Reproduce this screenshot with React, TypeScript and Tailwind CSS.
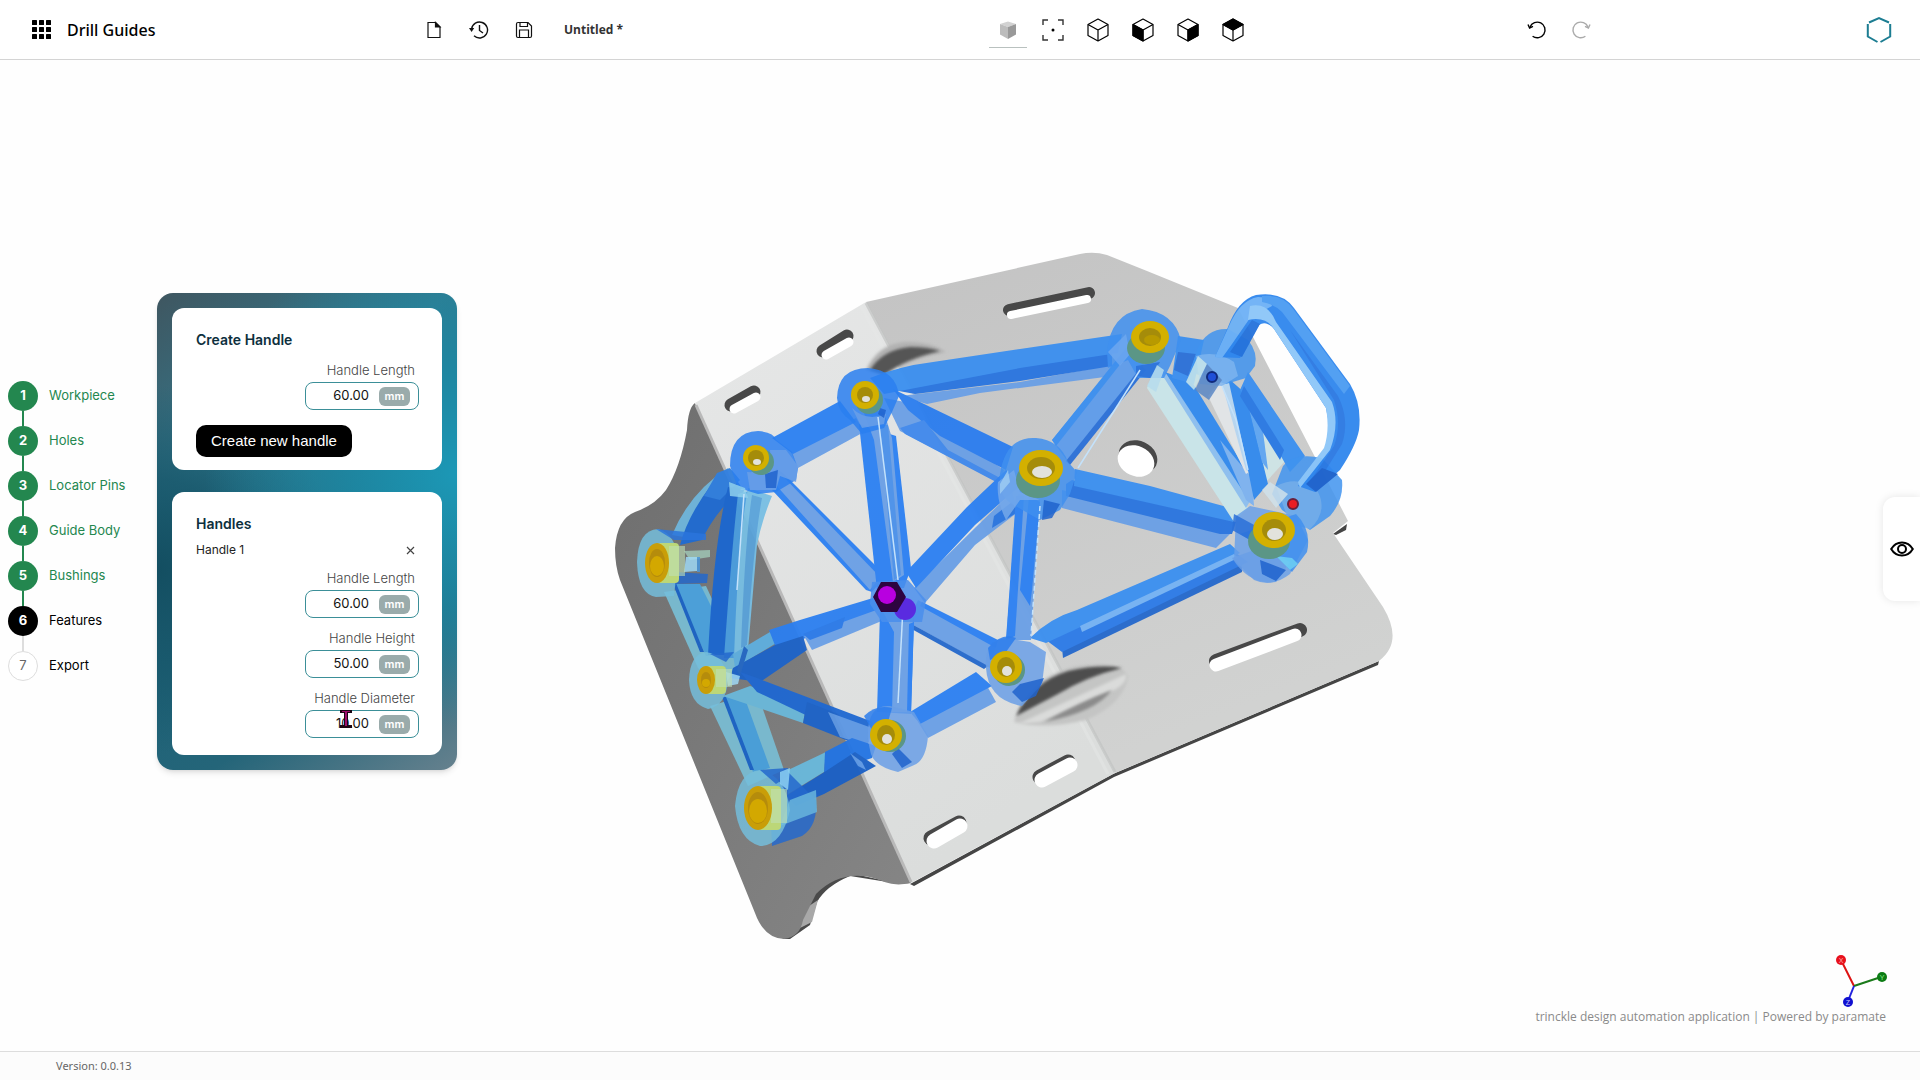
import { useState } from 'react'
import { clsx } from 'clsx'

const STEPS = ['Workpiece', 'Holes', 'Locator Pins', 'Guide Body', 'Bushings', 'Features', 'Export']
const CURRENT_STEP = 6

const HANDLE_FIELDS = [
  { id: 'handle-length', label: 'Handle Length', value: '60.00' },
  { id: 'handle-height', label: 'Handle Height', value: '50.00' },
  { id: 'handle-diameter', label: 'Handle Diameter', value: '10.00' },
]

type Shape = [fill: string, d: string]

// Struts of the guide body, back to front
const STRUTS: Shape[] = [
  // B - C
  ['#6fb6dc', 'M728 468 Q690 492 672 535 L690 538 Q710 505 738 482Z'],
  ['#1f6bd2', 'M730 470 L712 484 Q688 515 680 545 L702 540 Q715 512 742 488Z'],
  ['#2f7fe0', 'M717 473 L730 468 L740 480 L720 500 L704 496Z'],
  // C - D
  ['#79bcd2', 'M664 592 L706 586 L740 660 L722 690 L698 668Z'],
  ['#4aa2de', 'M674 584 L700 584 L734 652 L706 656Z'],
  ['#1b63c6', 'M673 584 L676 583 L704 652 L700 652Z'],
  // B - D
  ['#1b67d0', 'M728 487 L744 490 Q736 530 726 655 L708 655 Q714 540 728 487Z'],
  ['#4a9ddf', 'M738 494 L752 490 Q742 540 736 658 L724 658 Q732 545 738 494Z'],
  ['#78bfe4', 'M748 488 L772 496 Q762 520 757 545 L748 650 L734 658 Q738 540 748 488Z'],
  ['#5aa3da', 'M752 495 L762 498 Q754 540 747 645 L741 648 Q745 540 752 495Z'],
  // D - E
  ['#79bcd2', 'M710 706 L757 692 L784 770 L748 786Z'],
  ['#48a0dc', 'M724 696 L744 696 L770 768 L753 772Z'],
  ['#1b63c6', 'M722 697 L726 697 L754 770 L750 770Z'],
  // H - D
  ['#5fafe0', 'M733 654 L770 632 L778 642 L735 668Z'],
  ['#2b7ff0', 'M769 630 L800 620 L873 598 L882 612 L800 640 L776 648Z'],
  ['#1d63c9', 'M733 668 L775 645 L803 636 L807 650 L760 682 L730 678Z'],
  ['#6a9fe6', 'M804 636 L882 608 L884 620 L812 650Z'],
  ['#2878e8', 'M803 634 L845 617 L842 628 L810 640Z'],
  ['#2468c4', 'M737 670 L744 646 L748 650 L740 676Z'],
  // D - F
  ['#6bb9da', 'M723 696 L750 686 L807 702 L803 723 L753 706Z'],
  ['#1f68d2', 'M740 672 L757 678 L873 722 L868 738 L833 728 L757 692Z'],
  ['#1d63c9', 'M807 702 L838 714 L866 748 L803 723Z'],
  ['#5c97e4', 'M828 712 L872 728 L868 746 L840 737Z'],
  // F - E
  ['#69b9dc', 'M786 771 L826 752 L824 772 L788 794Z'],
  ['#2274e4', 'M825 752 L852 738 L876 746 L872 758 L824 774Z'],
  ['#1a60c6', 'M786 796 L826 771 L855 752 L876 766 L824 794 L796 806Z'],
  ['#5c97e4', 'M850 753 L862 762 L866 770 L858 766Z'],
  // A - J
  ['#6a9fe6', 'M900 396 L1020 382 L1127 362 L1128 374 L980 393 L927 404Z'],
  ['#2874e0', 'M883 388 L1020 364 L1112 350 L1112 366 L1020 381 L915 394Z'],
  ['#3a8ff0', 'M870 378 Q900 366 933 362 L1020 349 L1122 334 L1118 353 L1020 368 L884 394Z'],
  // B - A
  ['#6a9fe6', 'M790 450 L856 418 L864 432 L798 468Z'],
  ['#2b80f2', 'M772 438 L840 401 L856 422 L793 454Z'],
  // B - H
  ['#2b80f2', 'M776 468 L784 474 L886 576 L872 592 L866 590 L772 490Z'],
  ['#6a9fe6', 'M777 470 L880 577 L870 590 L800 512 L775 484Z'],
  // A - I
  ['#6a9fe6', 'M884 398 L905 402 L1004 470 L1000 483 L900 431Z'],
  ['#2a7def', 'M893 389 L1013 447 L1006 470 L940 436 L908 410Z'],
  ['#3f88ec', 'M900 428 L924 420 L948 450 L1000 478 L998 483 L905 434Z'],
  // A - H
  ['#2b80f2', 'M859 424 L896 436 L911 568 L904 588 L877 590Z'],
  ['#6a9fe6', 'M862 408 L884 412 L892 438 L904 575 L893 582 L874 440Z'],
  ['#4a90ea', 'M880 425 L888 425 L901 575 L894 580Z'],
  // H - I
  ['#6a9fe6', 'M914 588 L978 525 L1012 492 L1018 512 L975 545 L925 603Z'],
  ['#2b80f2', 'M906 572 L967 507 L1006 470 L1022 484 L975 525 L916 588Z'],
  ['#2874e0', 'M994 516 L1012 502 L1018 512 L992 528Z'],
  // I - J
  ['#5e9ceb', 'M1052 440 L1126 350 L1144 364 L1068 462Z'],
  ['#3a8ff0', 'M1052 440 L1126 348 L1129 353 L1056 446Z'],
  ['#2a70d8', 'M1066 461 L1142 366 L1146 370 L1070 465Z'],
  // I - K
  ['#6a9fe6', 'M1062 490 L1234 530 L1216 548 L1062 508Z'],
  ['#2874e0', 'M1066 484 L1072 480 L1236 522 L1232 534 L1220 534 L1066 496Z'],
  ['#3a8ff0', 'M1075 469 L1150 486 L1238 510 L1234 522 L1074 486Z'],
  // J - K
  ['#c9e6ea', 'M1156 365 L1147 388 L1234 522 L1248 508Z'],
  ['#8cbff0', 'M1156 365 L1166 374 L1252 498 L1246 508Z'],
  ['#3189ee', 'M1165 372 L1192 382 L1246 470 L1256 492 L1250 502Z'],
  ['#7cb2f0', 'M1220 440 L1252 478 L1254 506 L1246 500Z'],
  // J - L
  ['#3a8ff0', 'M1178 336 L1204 340 L1194 384 L1172 378Z'],
  ['#2a70d8', 'M1178 352 L1196 354 L1188 376 L1174 370Z'],
  // L - K, L - M
  ['#e3e6e8', 'M1208 396 L1224 376 L1252 470 L1246 474Z'],
  ['#b6d6f2', 'M1222 384 L1230 380 L1252 474 L1246 470Z'],
  ['#cfe5e6', 'M1248 398 L1286 460 L1266 482Z'],
  ['#3189ee', 'M1228 378 L1246 394 L1268 484 L1254 500 L1244 450Z'],
  ['#5ea6f2', 'M1244 388 L1262 424 L1268 470 L1262 462Z'],
  ['#3a8ff0', 'M1248 372 L1305 456 L1290 472 L1282 458 L1240 390Z'],
  ['#2878e4', 'M1244 386 L1284 450 L1280 460 L1240 396Z'],
  // G - K
  ['#2468cc', 'M1062 648 L1242 560 L1242 572 L1063 658Z'],
  ['#2b7ae8', 'M1046 640 L1236 553 L1248 562 L1062 652Z'],
  ['#3a8ff0', 'M1030 638 Q1050 618 1077 610 L1193 560 L1230 544 L1240 553 L1046 643Z'],
  ['#74b2f4', 'M1080 626 L1234 554 L1238 558 L1082 632Z'],
  // I - G
  ['#6a9fe6', 'M1018 494 L1040 500 L1031 640 L1006 640Z'],
  ['#2b80f2', 'M1016 496 L1024 496 L1015 636 L1006 640Z'],
  ['#2b80f2', 'M1029 496 L1040 502 L1032 590 L1030 606 L1020 590Z'],
  // H - G
  ['#6a9fe6', 'M918 600 L996 644 L990 668 L908 622Z'],
  ['#2b80f2', 'M922 602 L998 640 L996 648 L920 606Z'],
  ['#2468cc', 'M908 622 L988 666 L984 669 L908 627Z'],
  // H - F
  ['#2b80f2', 'M880 612 L914 616 L911 714 L877 712Z'],
  ['#6a9fe6', 'M882 610 L914 612 L908 712 L892 712 L894 632Z'],
  ['#2b80f2', 'M909 624 L914 622 L911 713 L907 713Z'],
  // F - G
  ['#6a9fe6', 'M918 722 L986 684 L996 702 L928 738Z'],
  ['#2b80f2', 'M910 712 L976 672 L992 686 L920 724Z'],
]

// Bosses that carry the bushings, and the two handle feet
const BOSSES: Shape[] = [
  ['#2a7ff0', 'M837 398 Q838 368 868 368 Q896 370 899 396 L892 412 L884 428 L862 434 L850 420 Q838 412 837 398Z'],
  ['#6a9fe6', 'M852 408 Q866 422 886 414 L884 424 L862 428Z'],
  ['#2063cc', 'M880 408 L886 410 L884 418 L878 414Z'],
  ['#2a7ff0', 'M730 466 Q730 432 758 431 Q774 432 776 440 L792 452 L798 468 L796 480 L776 492 L758 494 L738 488Z'],
  ['#6a9fe6', 'M747 472 Q772 474 770 450 L786 450 L798 466 L796 482 L780 476 L776 490 L750 490Z'],
  ['#2063cc', 'M765 474 L778 470 L776 488 L766 488Z'],
  ['#8fd0ec', 'M729 482 L745 488 L748 498 L730 496Z'],
  ['#74bdda', 'M637 562 Q638 530 658 529 Q676 534 678 560 L674 596 L656 597 Q638 594 637 562Z'],
  ['#2a74dc', 'M656 529 L706 534 L706 540 L674 540Z'],
  ['#2468cc', 'M674 572 L708 574 L707 583 L676 584Z'],
  ['#9fc4b4', 'M684 551 L710 550 L710 557 L690 560Z'],
  ['#9fd8f4', 'M686 557 L697 557 L697 571 L684 572Z'],
  ['#4a96dc', 'M697 557 L700 557 L700 572 L697 572Z'],
  ['#74bdda', 'M689 680 Q690 654 706 652 Q724 654 728 680 Q726 706 708 709 Q690 704 689 680Z'],
  ['#2468cc', 'M710 654 L734 652 L726 662Z'],
  ['#9fd8f4', 'M726 672 L740 676 L738 684 L728 686Z'],
  ['#2468cc', 'M784 768 L816 800 Q818 826 802 836 L772 846 L770 800Z'],
  ['#69b5dc', 'M790 800 L816 790 L817 812 L780 826Z'],
  ['#74bdda', 'M735 806 Q738 772 760 770 Q786 776 790 810 Q782 846 760 846 Q738 840 735 806Z'],
  ['#2468cc', 'M760 770 L788 768 L788 776 L776 784Z'],
  ['#8cd0f2', 'M780 772 L790 768 L788 790 L780 784Z'],
  ['#6a9fe6', 'M868 740 Q866 704 890 706 L914 712 L928 736 Q926 762 912 766 L898 772 Q872 766 870 750Z'],
  ['#2b7cec', 'M864 716 Q876 704 892 708 L888 722 L872 730Z'],
  ['#2063cc', 'M898 748 L912 762 L902 768 L892 754Z'],
  ['#6a9fe6', 'M986 668 Q984 640 1006 638 L1030 642 L1046 652 L1042 684 L1022 706 Q988 700 986 668Z'],
  ['#2b7cec', 'M988 648 Q1002 632 1016 638 L1006 652 L990 660Z'],
  ['#2063cc', 'M1020 684 L1044 678 L1036 696 L1022 702 L1012 692Z'],
  ['#3f8fee', 'M1000 474 Q1006 436 1036 438 Q1060 440 1068 462 L1077 472 L1070 494 L1060 510 L1040 520 L1012 504 Q998 496 1000 474Z'],
  ['#74a8ea', 'M998 482 L1014 470 L1020 492 L1040 500 L1020 500 L1006 520 Q996 500 998 482Z'],
  ['#2063cc', 'M1044 500 L1060 504 L1052 518 L1042 520Z'],
  ['#9ccbf2', 'M1000 484 L1008 470 L1010 482 L1000 494Z'],
  ['#3f8fee', 'M1107 352 Q1110 314 1142 309 Q1174 312 1181 340 L1170 366 L1164 378 L1138 378 L1128 360 L1108 368Z'],
  ['#6da7ee', 'M1108 352 L1126 334 L1130 354 L1120 366Z'],
  ['#2a70d8', 'M1136 366 L1160 362 L1150 378 L1136 376Z'],
  ['#b6dcec', 'M1157 365 L1164 370 L1156 392 L1147 386Z'],
  ['#3f93ef', 'M1197 350 Q1206 328 1228 329 L1248 340 Q1258 352 1255 366 L1246 378 L1226 384 L1190 372Z'],
  ['#7db4ee', 'M1196 356 Q1216 350 1234 362 L1238 376 L1222 386 L1200 384Z'],
  ['#c9e6ea', 'M1198 356 L1207 364 L1194 390 L1186 382Z'],
  ['#5b87c4', 'M1207 364 L1222 380 L1209 400 L1195 390Z'],
  ['#3f93ef', 'M1283 466 Q1294 452 1322 458 L1342 480 Q1344 500 1330 516 L1310 530 L1282 510 L1272 494Z'],
  ['#75aee9', 'M1276 486 Q1300 474 1318 492 Q1328 512 1310 529 L1290 524Z'],
  ['#cfe0ea', 'M1270 482 L1288 494 L1276 508 L1262 490Z'],
  ['#6aa0e8', 'M1236 516 L1250 506 L1296 516 L1308 540 L1290 574 Q1272 588 1254 580 L1234 560Z'],
  ['#3f8fee', 'M1240 534 L1296 514 Q1312 530 1307 552 L1292 572 L1276 556Z'],
  ['#2a70d8', 'M1234 514 L1256 526 L1250 540 L1232 530Z'],
  ['#6a9fe6', 'M1232 558 L1260 548 L1290 562 L1276 582 Q1250 586 1232 558Z'],
  ['#2063cc', 'M1260 560 L1286 570 L1276 581 L1262 574Z'],
  ['#6fd0f2', 'M1276 556 L1292 558 L1298 564 L1290 570Z'],
  // boss around the centre pin
  ['#4a8eec', 'M872 582 L908 580 L926 600 L922 622 L882 622 L870 604Z'],
]

const HANDLE: Shape[] = [
  ['#2f86ee', 'M1215 357 L1228 327 Q1238 300 1256 295 Q1282 291 1294 308 L1350 384 Q1362 404 1359 430 Q1356 446 1340 470 L1315 492 L1298 486 L1324 450 Q1332 434 1326 408 L1274 329 Q1266 320 1259 325 L1240 358Z'],
  ['#6db1f6', 'M1215 357 L1229 326 Q1240 300 1258 297 Q1272 297 1272 306 L1250 318 L1232 344 L1222 358Z'],
  ['#8cc6f8', 'M1250 306 Q1268 302 1276 322 L1332 402 Q1340 424 1330 450 L1300 488 L1298 482 L1324 448 Q1330 430 1326 408 L1274 329 Q1266 316 1248 320Z'],
  ['#2472dc', 'M1252 320 L1260 324 L1242 357 L1230 352Z'],
  ['#4a9bf2', 'M1262 296 Q1284 294 1294 310 L1350 386 L1344 394 L1282 312 Q1274 304 1262 302Z'],
  ['#2a78e2', 'M1290 330 L1338 396 Q1350 420 1342 444 L1322 476 L1308 484 L1334 446 Q1342 424 1334 400Z'],
  ['#2063cc', 'M1322 468 L1338 474 L1316 492 L1306 484Z'],
]

const GLINTS = [
  'M878 417 L898 580',
  'M903 607 L898 703',
  'M1078 468 L1140 370',
  'M744 494 L737 590',
  'M1222 386 L1236 420 L1248 470',
]

// Bushings seen from above: centre, outer and inner radii, offset of the lower rim
const BUSHINGS = [
  { x: 865, y: 395, rx: 14, ry: 14, ix: 8, iy: 8, dx: 4, dy: 5, through: true },
  { x: 756, y: 458, rx: 13, ry: 13, ix: 8, iy: 8, dx: 5, dy: 4, through: true },
  { x: 886, y: 735, rx: 16, ry: 16, ix: 9, iy: 10, dx: 4, dy: 1, through: true },
  { x: 1006, y: 667, rx: 16, ry: 16, ix: 9, iy: 10, dx: 3, dy: 3, through: true },
  { x: 1041, y: 468, rx: 22, ry: 18, ix: 14, iy: 11, dx: -3, dy: 12, through: true },
  { x: 1150, y: 337, rx: 19, ry: 16, ix: 11, iy: 9, dx: -4, dy: 11, through: false },
  { x: 1274, y: 530, rx: 21, ry: 18, ix: 12, iy: 11, dx: -5, dy: 11, through: true },
]

const SIDE_BUSHINGS = [
  { x: 657, y: 563, rx: 12, ry: 20, depth: 18 },
  { x: 706, y: 680, rx: 9, ry: 14, depth: 16 },
  { x: 758, y: 808, rx: 14, ry: 22, depth: 19 },
]

function Workpiece() {
  return (
    <g>
      {/* left flange */}
      <path d="M900 884 L850 876 Q826 886 817 902 L810 925 L790 939 L783 939 L776 925 L820 885 L850 873Z" fill="#4a4a4a" />
      <path d="M818 900 L812 922 L800 928 L806 908Z" fill="#a8a8a8" />
      <path d="M695 403 Q688 408 687 430 Q680 468 666 490 Q655 505 635 512 Q617 519 615 548 Q615 566 620 580 L755 913 Q764 938 784 939 Q800 937 803 920 L816 894 Q836 874 862 876 C884 878 886 888 911 883Z" fill="url(#flange)" />
      {/* plate edge */}
      <path d="M910 884 L1113 774 L1379 661 L1378 665 L1114 777 L914 886Z" fill="#454545" />
      <path d="M1333 534 L1347 524 L1346 530 L1336 535Z" fill="#454545" />
      {/* middle plate */}
      <path d="M695 403 L866 302 L1115 773 L911 883Z" fill="url(#plate)" />
      {/* right plate */}
      <path d="M866 302 L1080 254 Q1094 251 1107 255 L1147 271 L1238 308 L1348 521 L1333 533 L1383 607 Q1404 642 1379 661 L1115 773Z" fill="url(#wing)" />
      <path d="M866 303 L1115 772" stroke="#c2c4c3" strokeWidth="3" opacity="0.7" />
      <path d="M861 306 L1108 774" stroke="#e6e8e7" strokeWidth="3" opacity="0.5" />
      <path d="M696 405 L911 882" stroke="#b9b9b9" strokeWidth="3" />
      {/* beads pressed over the bend */}
      <path d="M866 370 Q878 344 905 342 Q930 341 946 352 Q910 358 884 374Z" fill="#b2b2b2" filter="url(#soft)" />
      <path d="M870 370 Q882 350 910 347 Q928 347 940 351 Q905 359 884 375Z" fill="#555" filter="url(#soft)" />
      <path d="M1014 722 Q1024 680 1075 666 Q1120 660 1128 676 Q1124 704 1086 720 Q1044 730 1014 722Z" fill="#c4c5c4" filter="url(#soft)" />
      <path d="M1016 716 Q1032 682 1068 671 Q1100 664 1122 668 Q1088 676 1058 694Z" fill="#4d4d4d" filter="url(#soft)" />
      <path d="M1018 724 L1126 674 Q1128 684 1110 692 L1040 722Z" fill="#dadbda" filter="url(#soft)" />
      <path d="M1044 722 Q1080 702 1112 690 Q1096 712 1044 722Z" fill="#8b8b8b" filter="url(#soft)" />
      {/* slots */}
      <g strokeLinecap="round" fill="none">
        <path d="M731 405 L754 392" stroke="#484848" strokeWidth="13" />
        <path d="M823 351 L847 336" stroke="#484848" strokeWidth="13" />
        <path d="M1009 310 L1089 293" stroke="#484848" strokeWidth="12" />
        <path d="M1216 661 L1300 630" stroke="#484848" strokeWidth="14" />
        <path d="M1040 777 L1068 762" stroke="#484848" strokeWidth="15" />
        <path d="M931 838 L959 823" stroke="#484848" strokeWidth="15" />
        <g stroke="#fff">
          <path d="M734 409 L756 397" strokeWidth="9" />
          <path d="M826 355 L849 342" strokeWidth="9" />
          <path d="M1011 315 L1087 299" strokeWidth="8" />
          <path d="M1216 665 L1295 635" strokeWidth="13" />
          <path d="M1042 780 L1070 765" strokeWidth="15" />
          <path d="M934 841 L960 826" strokeWidth="15" />
        </g>
      </g>
      <ellipse cx="1138" cy="457" rx="20" ry="16" fill="#484848" transform="rotate(25 1138 457)" />
      <ellipse cx="1136" cy="461" rx="19" ry="15" fill="#fff" transform="rotate(25 1136 461)" />
    </g>
  )
}

function ModelView() {
  return (
    <svg
      className="absolute inset-0 h-full w-full"
      viewBox="0 60 1920 991"
      role="img"
      aria-label="Drill guide model"
    >
      <defs>
        <linearGradient id="flange" x1="0" y1="0" x2="1" y2="1">
          <stop offset="0" stopColor="#6e6e6e" />
          <stop offset="1" stopColor="#868686" />
        </linearGradient>
        <linearGradient id="plate" x1="0" y1="0" x2="0.5" y2="1">
          <stop offset="0" stopColor="#e6e7e7" />
          <stop offset="1" stopColor="#dbdddc" />
        </linearGradient>
        <linearGradient id="wing" x1="0" y1="0" x2="0.4" y2="1">
          <stop offset="0" stopColor="#c3c3c3" />
          <stop offset="1" stopColor="#d1d2d1" />
        </linearGradient>
        <filter id="soft">
          <feGaussianBlur stdDeviation="1.5" />
        </filter>
      </defs>

      <Workpiece />

      <g opacity="0.95">
        {STRUTS.map(([fill, d]) => (
          <path key={d} d={d} fill={fill} />
        ))}
      </g>
      <g>
        {BOSSES.map(([fill, d]) => (
          <path key={d} d={d} fill={fill} fillOpacity="0.85" />
        ))}
      </g>
      <g opacity="0.95">
        {HANDLE.map(([fill, d]) => (
          <path key={d} d={d} fill={fill} />
        ))}
      </g>
      {GLINTS.map((d) => (
        <path key={d} d={d} fill="none" stroke="#c4e2fb" strokeWidth="1.5" />
      ))}
      <path d="M1040 506 L1031 636" stroke="#c4e2fb" strokeWidth="1.5" strokeDasharray="5 3" />

      {SIDE_BUSHINGS.map((b) => (
        <g key={b.x}>
          <rect x={b.x} y={b.y - b.ry} width={b.depth + 4} height={b.ry * 2} rx="4" fill="#bcd778" />
          <rect x={b.x + b.depth - 6} y={b.y - b.ry + 3} width="16" height={b.ry * 2 - 10} fill="#bfe0b4" opacity="0.6" />
          <ellipse cx={b.x} cy={b.y} rx={b.rx} ry={b.ry} fill="#c99e08" />
          <ellipse cx={b.x} cy={b.y} rx={b.rx - 4} ry={b.ry - 6} fill="#b58c0c" />
          <ellipse cx={b.x} cy={b.y + 3} rx={b.rx - 5} ry={b.ry - 10} fill="#d3a800" />
        </g>
      ))}
      {BUSHINGS.map((b) => (
        <g key={b.x}>
          <ellipse cx={b.x + b.dx} cy={b.y + b.dy} rx={b.rx} ry={b.ry} fill="#5b9686" />
          <ellipse cx={b.x} cy={b.y} rx={b.rx} ry={b.ry} fill="#d3b000" />
          <ellipse cx={b.x} cy={b.y} rx={b.ix} ry={b.iy} fill="#a58c0a" />
          {b.through ? (
            <ellipse cx={b.x + 1} cy={b.y + 4} rx={b.ix - 4} ry={b.iy - 5} fill="#e2e2dc" />
          ) : (
            <ellipse cx={b.x + 2} cy={b.y + 3} rx={b.ix - 3} ry={b.iy - 4} fill="#b89a00" />
          )}
        </g>
      ))}

      <circle cx="905" cy="609" r="11" fill="#5a2be0" />
      <path d="M881 582 L897 582 L906 597 L897 612 L881 612 L873 597Z" fill="#2d0440" />
      <circle cx="887" cy="595" r="9" fill="#b800e0" />
      <circle cx="1212" cy="377" r="5" fill="#1f4fd8" stroke="#102a7c" strokeWidth="2" />
      <circle cx="1293" cy="504" r="5" fill="#ea1c24" stroke="#6a1f3c" strokeWidth="2" />

      {/* axis widget */}
      <g strokeWidth="2" fontFamily="Liberation Sans, sans-serif" fontSize="7" textAnchor="middle">
        <path d="M1854 986 L1841 960" stroke="#d11" />
        <path d="M1854 986 L1881 977" stroke="#1a7a1a" />
        <path d="M1854 986 L1848 1001" stroke="#22d" />
        <circle cx="1841" cy="960" r="5" fill="#e8101c" />
        <circle cx="1882" cy="977" r="5" fill="#0c7c14" />
        <circle cx="1848" cy="1002" r="5" fill="#1010d0" />
        <text x="1841" y="963" fill="#ffb0b0">X</text>
        <text x="1882" y="980" fill="#8df08d">Y</text>
        <text x="1848" y="1005" fill="#c8c8ff">Z</text>
      </g>
    </svg>
  )
}

function CubeIcon({ face }: { face?: 'left' | 'right' | 'top' }) {
  return (
    <svg width="24" height="26" viewBox="0 0 24 26" fill="none" stroke="#000" strokeWidth="1.2" strokeLinejoin="round">
      <path d="M12 2 L22 7.5 V18.5 L12 24 L2 18.5 V7.5Z" />
      <path d="M2 7.5 L12 13 L22 7.5 M12 13 V24" />
      {face === 'left' && <path d="M2 7.5 L12 13 V24 L2 18.5Z" fill="#000" />}
      {face === 'right' && <path d="M22 7.5 L12 13 V24 L22 18.5Z" fill="#000" />}
      {face === 'top' && <path d="M12 2 L22 7.5 L12 13 L2 7.5Z" fill="#000" />}
    </svg>
  )
}

function UndoIcon() {
  return (
    <svg width="20" height="20" viewBox="0 0 20 20" fill="none" stroke="currentColor" strokeWidth="1.4">
      <path d="M3 7 A7.8 7.8 0 1 1 5.6 16.2" />
      <path d="M1 4.5 L2.6 8 L6 6.4" />
    </svg>
  )
}

function Header() {
  const iconButton = 'flex h-9 w-[45px] items-center justify-center'
  return (
    <header className="relative flex h-[60px] shrink-0 items-center border-b border-[#d4d4d4] bg-white">
      <div className="flex w-[411px] shrink-0 items-center gap-4 pl-8">
        <button aria-label="Applications">
          <svg width="19" height="19" viewBox="0 0 19 19">
            {[0, 7, 14].map((y) =>
              [0, 7, 14].map((x) => <rect key={`${x}-${y}`} x={x} y={y} width="5" height="5" rx="0.5" />)
            )}
          </svg>
        </button>
        <h1 className="font-['Noto_Sans'] text-base font-medium text-black">Drill Guides</h1>
      </div>

      <div className="flex items-center">
        <button aria-label="New file" className={iconButton}>
          <svg width="16" height="18" viewBox="0 0 16 18" fill="none" stroke="#111" strokeWidth="1.2">
            <path d="M2 1.5 H9.5 L14 6 V16.5 H2Z" />
            <path d="M9.5 1.5 V6 H14Z" fill="#111" />
          </svg>
        </button>
        <button aria-label="History" className={iconButton}>
          <svg width="20" height="20" viewBox="0 0 20 20" fill="none" stroke="#111" strokeWidth="1.4">
            <path d="M2.6 9 A8 8 0 1 1 5 15.8" />
            <path d="M10.5 5 V10.5 L14 13" />
            <path d="M0 8 H5.2 L2.6 12Z" fill="#111" stroke="none" />
          </svg>
        </button>
        <button aria-label="Save" className={iconButton}>
          <svg width="18" height="18" viewBox="0 0 18 18" fill="none" stroke="#111" strokeWidth="1.2">
            <path d="M3 1.5 H13 L16.5 5 V15 Q16.5 16.5 15 16.5 H3 Q1.5 16.5 1.5 15 V3 Q1.5 1.5 3 1.5Z" />
            <path d="M5 1.5 V5.5 H12.5 V1.5 M4.5 16.5 V9 H13.5 V16.5" />
          </svg>
        </button>
        <span className="ml-[18px] font-['Open_Sans'] text-xs font-bold text-[#333]">Untitled *</span>
      </div>

      <div className="absolute left-1/2 top-3 ml-[25px] flex items-center">
        <button aria-label="Shaded view" className={iconButton}>
          <span className="flex h-9 w-[38px] items-center justify-center border-b border-[#b9c1bf]">
            <svg width="18" height="18" viewBox="0 0 18 18">
              <path d="M1 3 L9 0.5 L17 3 L9 6Z" fill="#d2d2d2" />
              <path d="M1 3 L9 6 V18 L1 13.5Z" fill="#bcbcbc" />
              <path d="M17 3 L9 6 V18 L17 13.5Z" fill="#999" />
            </svg>
          </span>
        </button>
        <button aria-label="Fit to view" className={iconButton}>
          <svg width="22" height="22" viewBox="0 0 22 22" fill="none" stroke="#333" strokeWidth="1.4">
            <path d="M1 6 V1 H6 M16 1 H21 V6 M21 16 V21 H16 M6 21 H1 V16" />
            <circle cx="11" cy="11" r="1.5" fill="#000" stroke="none" />
          </svg>
        </button>
        <button aria-label="Isometric view" className={iconButton}><CubeIcon /></button>
        <button aria-label="Left view" className={iconButton}><CubeIcon face="left" /></button>
        <button aria-label="Right view" className={iconButton}><CubeIcon face="right" /></button>
        <button aria-label="Top view" className={iconButton}><CubeIcon face="top" /></button>
      </div>

      <div className="ml-auto flex items-center pr-7">
        <button aria-label="Undo" className={iconButton}><UndoIcon /></button>
        <button aria-label="Redo" className={clsx(iconButton, 'mr-[262px] -scale-x-100 text-[#aaa]')}>
          <UndoIcon />
        </button>
        <svg width="26" height="28" viewBox="0 0 26 28" fill="none" stroke="#1c7d92" strokeWidth="2">
          <path d="M3 6.5 L13 2 L23 6.5 M1.8 8 V20.5 L11.5 26 M24.2 8 V20.5 L14.5 26" />
        </svg>
      </div>
    </header>
  )
}

function Stepper() {
  return (
    <ol className="-mt-0.5 flex w-[157px] shrink-0 flex-col gap-[15px] pl-2">
      {STEPS.map((label, i) => {
        const n = i + 1
        const done = n < CURRENT_STEP
        const active = n === CURRENT_STEP
        return (
          <li key={label} className="relative">
            {n < STEPS.length && (
              <span className={clsx('absolute left-[14px] top-[30px] h-[15px] w-0.5', done ? 'bg-[#23874f]' : 'bg-[#ddd]')} />
            )}
            <button className="flex items-center gap-[11px] text-[13px]">
              <span
                className={clsx(
                  'flex size-[30px] items-center justify-center rounded-full',
                  done && 'bg-[#23874f] font-bold text-white',
                  active && 'bg-black font-bold text-white',
                  !done && !active && 'border border-[#ddd] bg-white text-[#666]'
                )}
              >
                {n}
              </span>
              <span className={done ? 'text-[#23874f]' : 'text-black'}>{label}</span>
            </button>
          </li>
        )
      })}
    </ol>
  )
}

interface NumberFieldProps {
  id: string
  label: string
  value: string
}

function NumberField({ id, label, value }: NumberFieldProps) {
  const [text, setText] = useState(value)
  return (
    <div className="flex flex-col items-end">
      <label htmlFor={id} className="pr-1 text-[13px] leading-5 font-light text-[#444]">
        {label}
      </label>
      <div className="mt-0.5 flex h-7 w-[114px] items-center gap-2.5 rounded-lg border border-[#3b8f98] pr-2">
        <input
          id={id}
          value={text}
          onChange={(e) => setText(e.target.value)}
          className="w-full min-w-0 bg-transparent text-right text-[13px] text-[#111] outline-none"
        />
        <span className="flex h-[19px] w-[31px] shrink-0 items-center justify-center rounded-md bg-[#9aabab] text-[11px] font-semibold text-white">
          mm
        </span>
      </div>
    </div>
  )
}

function HandlePanel() {
  const card = 'rounded-xl bg-white pl-6 pr-[23px] pt-5'
  const title = 'text-sm leading-6 font-semibold text-[#0d2f3d]'
  return (
    <section className="flex w-[300px] shrink-0 flex-col gap-[22px] rounded-2xl bg-[radial-gradient(circle_at_100%_38%,#1c98b6_0%,#1c8ca8cc_25%,transparent_60%),radial-gradient(circle_at_0%_58%,#134e61_0%,#17566acc_22%,transparent_45%),linear-gradient(145deg,#3f5660_0%,#33788c_30%,#1f6378_55%,#246579_75%,#66818e_100%)] p-[15px] shadow-md">
      <div className={clsx(card, 'pb-[13px]')}>
        <h2 className={title}>Create Handle</h2>
        <div className="mt-2">
          <NumberField id="new-handle-length" label="Handle Length" value="60.00" />
        </div>
        <button className="mt-[15px] h-8 rounded-[10px] bg-black px-[15px] font-['Liberation_Sans'] text-[15px] text-white">
          Create new handle
        </button>
      </div>

      <div className={clsx(card, 'relative pb-[17px]')}>
        <h2 className={title}>Handles</h2>
        <div className="flex h-7 items-center justify-between pr-1">
          <span className="text-xs text-[#222]">Handle 1</span>
          <button aria-label="Remove Handle 1">
            <svg width="9" height="9" viewBox="0 0 9 9" stroke="#444" strokeWidth="1.2">
              <path d="M1 1 L8 8 M8 1 L1 8" />
            </svg>
          </button>
        </div>
        <div className="mt-1 flex flex-col gap-2.5">
          {HANDLE_FIELDS.map((field) => (
            <NumberField key={field.id} {...field} />
          ))}
        </div>
        {/* text cursor */}
        <svg className="pointer-events-none absolute bottom-[27px] right-[90px]" width="12" height="18" viewBox="0 0 12 18">
          <path d="M0 0 H12 V3 H8 V15 H12 V18 H0 V15 H4 V3 H0Z" fill="#1c0614" />
          <path d="M2 1 H10 V2 H7 V16 H5 V2 H2Z" fill="#a0106c" />
        </svg>
      </div>
    </section>
  )
}

export default function App() {
  return (
    <div className="flex h-screen flex-col bg-[#fefefe] font-['Inter',sans-serif]">
      <Header />
      <main className="relative flex flex-1 items-center pb-12">
        <ModelView />
        <div className="relative flex items-center">
          <Stepper />
          <HandlePanel />
        </div>
        <button
          aria-label="Visibility"
          className="relative ml-auto mt-[34px] flex h-[104px] w-[37px] items-center justify-center rounded-l-xl bg-white shadow-[0_0_8px_rgba(0,0,0,0.1)]"
        >
          <svg width="24" height="16" viewBox="0 0 24 16" fill="none" stroke="#000" strokeWidth="2">
            <path d="M1.2 8 Q5 1.5 12 1.5 Q19 1.5 22.8 8 Q19 14.5 12 14.5 Q5 14.5 1.2 8Z" />
            <circle cx="12" cy="8" r="4" />
          </svg>
        </button>
        <p className="absolute bottom-[26px] right-[34px] font-['Open_Sans'] text-xs text-[#8a8a8a]">
          trinckle design automation application | Powered by paramate
        </p>
      </main>
      <footer className="flex h-[29px] shrink-0 items-center border-t border-[#ddd] bg-[#fcfcfc] pl-14 font-['Noto_Sans'] text-[11px] text-[#666]">
        Version: 0.0.13
      </footer>
    </div>
  )
}
